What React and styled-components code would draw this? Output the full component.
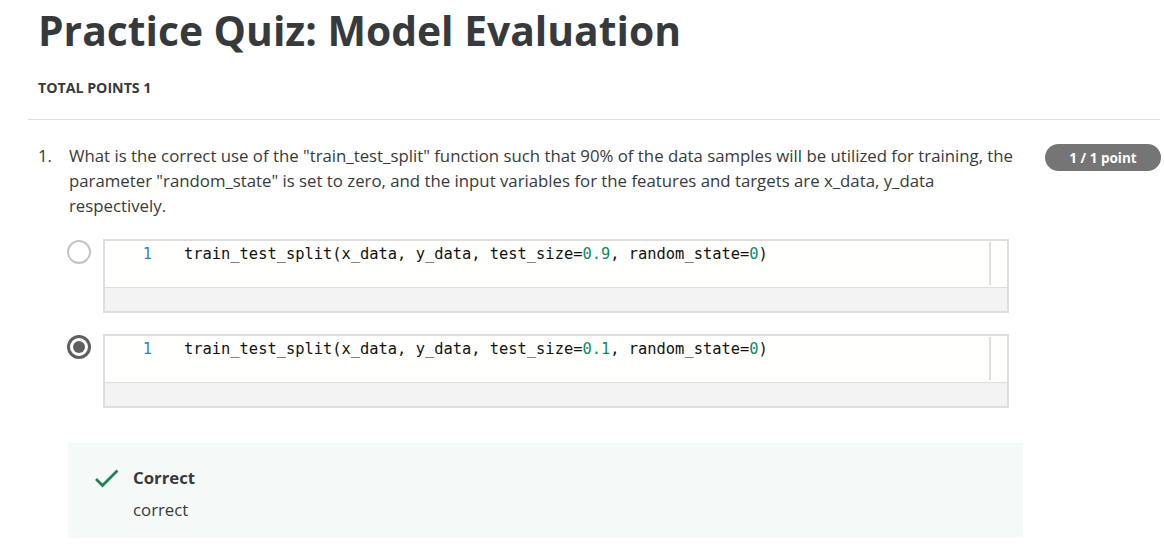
import React from "react";
import styled, { createGlobalStyle } from "styled-components";

const Global = createGlobalStyle`
  html, body { margin: 0; padding: 0; background: #fff; }
  body { font-family: "Open Sans", "Noto Sans", sans-serif; color: #373a3c; }
`;

const Page = styled.div`
  width: 1164px;
  padding-top: 4px;
`;

const Header = styled.div`
  padding-left: 38px;
`;

const Title = styled.h1`
  margin: 0;
  font-size: 40.8px;
  line-height: 52px;
  font-weight: 700;
  color: #373a3c;
`;

const TotalPoints = styled.div`
  margin-top: 23px;
  font-size: 14.2px;
  font-weight: 700;
  line-height: 18px;
  text-transform: uppercase;
  color: #373a3c;
`;

const Divider = styled.hr`
  margin: 22px 4px 0 28px;
  border: 0;
  border-top: 1px solid #e0e0e0;
`;

const QuestionRow = styled.div`
  display: flex;
  align-items: flex-start;
  padding: 23px 3px 0 38px;
`;

const Number = styled.div`
  width: 31px;
  flex: none;
  font-size: 16.8px;
  line-height: 25px;
`;

const Body = styled.div`
  flex: 1;
`;

const QuestionText = styled.div`
  font-size: 16.8px;
  line-height: 25px;
  width: 955px;
  color: #373a3c;
`;

const Badge = styled.div`
  flex: none;
  margin-left: auto;
  margin-top: 1px;
  width: 116px;
  height: 27px;
  border-radius: 14px;
  background: #757575;
  color: #fff;
  font-size: 13.5px;
  font-weight: 700;
  display: flex;
  align-items: center;
  justify-content: center;
`;

const Options = styled.div`
  display: flex;
  flex-direction: column;
  gap: 21px;
  margin-top: 21px;
`;

const Option = styled.div`
  display: flex;
  align-items: flex-start;
`;

const Radio = styled.span`
  flex: none;
  box-sizing: border-box;
  width: 24px;
  height: 24px;
  margin: 1px 12px 0 -2px;
  border-radius: 50%;
  border: ${(p) => (p.$checked ? "3px solid #5f5f5f" : "2px solid #c4c4c4")};
  display: flex;
  align-items: center;
  justify-content: center;
  &::after {
    content: "";
    display: ${(p) => (p.$checked ? "block" : "none")};
    width: 12px;
    height: 12px;
    border-radius: 50%;
    background: #5f5f5f;
  }
`;

const CodeBox = styled.div`
  box-sizing: border-box;
  width: 906px;
  border: 2px solid #dedede;
  background: #fff;
`;

const CodeArea = styled.div`
  display: flex;
  height: 46px;
  border-bottom: 1px solid #dedede;
  background: #fffffd;
`;

const CodeLine = styled.div`
  flex: 1;
  display: flex;
  padding-top: 3px;
  font-family: "DejaVu Sans Mono", "Liberation Mono", monospace;
  font-size: 15.4px;
  line-height: 20px;
  color: #111;
  white-space: pre;
`;

const LineNo = styled.span`
  width: 47px;
  text-align: right;
  padding-right: 32px;
  color: #2b88b8;
`;

const Num = styled.span`
  color: #0b8a6c;
`;

const ScrollTrack = styled.div`
  width: 16px;
  margin: 1px 0 0;
  border-left: 2px solid #dedede;
  height: 43px;
`;

const CodeFooter = styled.div`
  height: 23px;
  background: #f3f3f3;
`;

const Feedback = styled.div`
  box-sizing: border-box;
  width: 955px;
  height: 95px;
  margin: 35px 0 0 -1px;
  background: #f5f9f8;
  padding: 22px 0 0 26px;
  display: flex;
  align-items: flex-start;
  gap: 14px;
`;

const FeedbackText = styled.div`
  display: flex;
  flex-direction: column;
`;

const FeedbackTitle = styled.div`
  font-size: 16.8px;
  font-weight: 700;
  line-height: 26px;
  color: #373a3c;
`;

const FeedbackBody = styled.div`
  margin-top: 8px;
  font-size: 16.8px;
  line-height: 22px;
  color: #373a3c;
`;

const Check = () => (
  <svg width="25" height="22" viewBox="0 0 25 22" style={{ marginTop: 3 }}>
    <path d="M2 11 L8.5 17.5 L23.5 2.5" fill="none" stroke="#1f8354" strokeWidth="2.8" />
  </svg>
);

const Code = ({ size }) => (
  <CodeBox>
    <CodeArea>
      <CodeLine>
        <LineNo>1</LineNo>
        <span>
          train_test_split(x_data, y_data, test_size=<Num>{size}</Num>, random_state=<Num>0</Num>)
        </span>
      </CodeLine>
      <ScrollTrack />
    </CodeArea>
    <CodeFooter />
  </CodeBox>
);

export default function App() {
  return (
    <Page>
      <Global />
      <Header>
        <Title>Practice Quiz: Model Evaluation</Title>
        <TotalPoints>Total Points 1</TotalPoints>
      </Header>
      <Divider />
      <QuestionRow>
        <Number>1.</Number>
        <Body>
          <QuestionText>
            What is the correct use of the "train_test_split" function such that 90% of the data samples will be
            utilized for training, the parameter "random_state" is set to zero, and the input variables for the
            features and targets are x_data, y_data respectively.
          </QuestionText>
          <Options>
            <Option>
              <Radio />
              <Code size="0.9" />
            </Option>
            <Option>
              <Radio $checked />
              <Code size="0.1" />
            </Option>
          </Options>
          <Feedback>
            <Check />
            <FeedbackText>
              <FeedbackTitle>Correct</FeedbackTitle>
              <FeedbackBody>correct</FeedbackBody>
            </FeedbackText>
          </Feedback>
        </Body>
        <Badge>1 / 1 point</Badge>
      </QuestionRow>
    </Page>
  );
}
